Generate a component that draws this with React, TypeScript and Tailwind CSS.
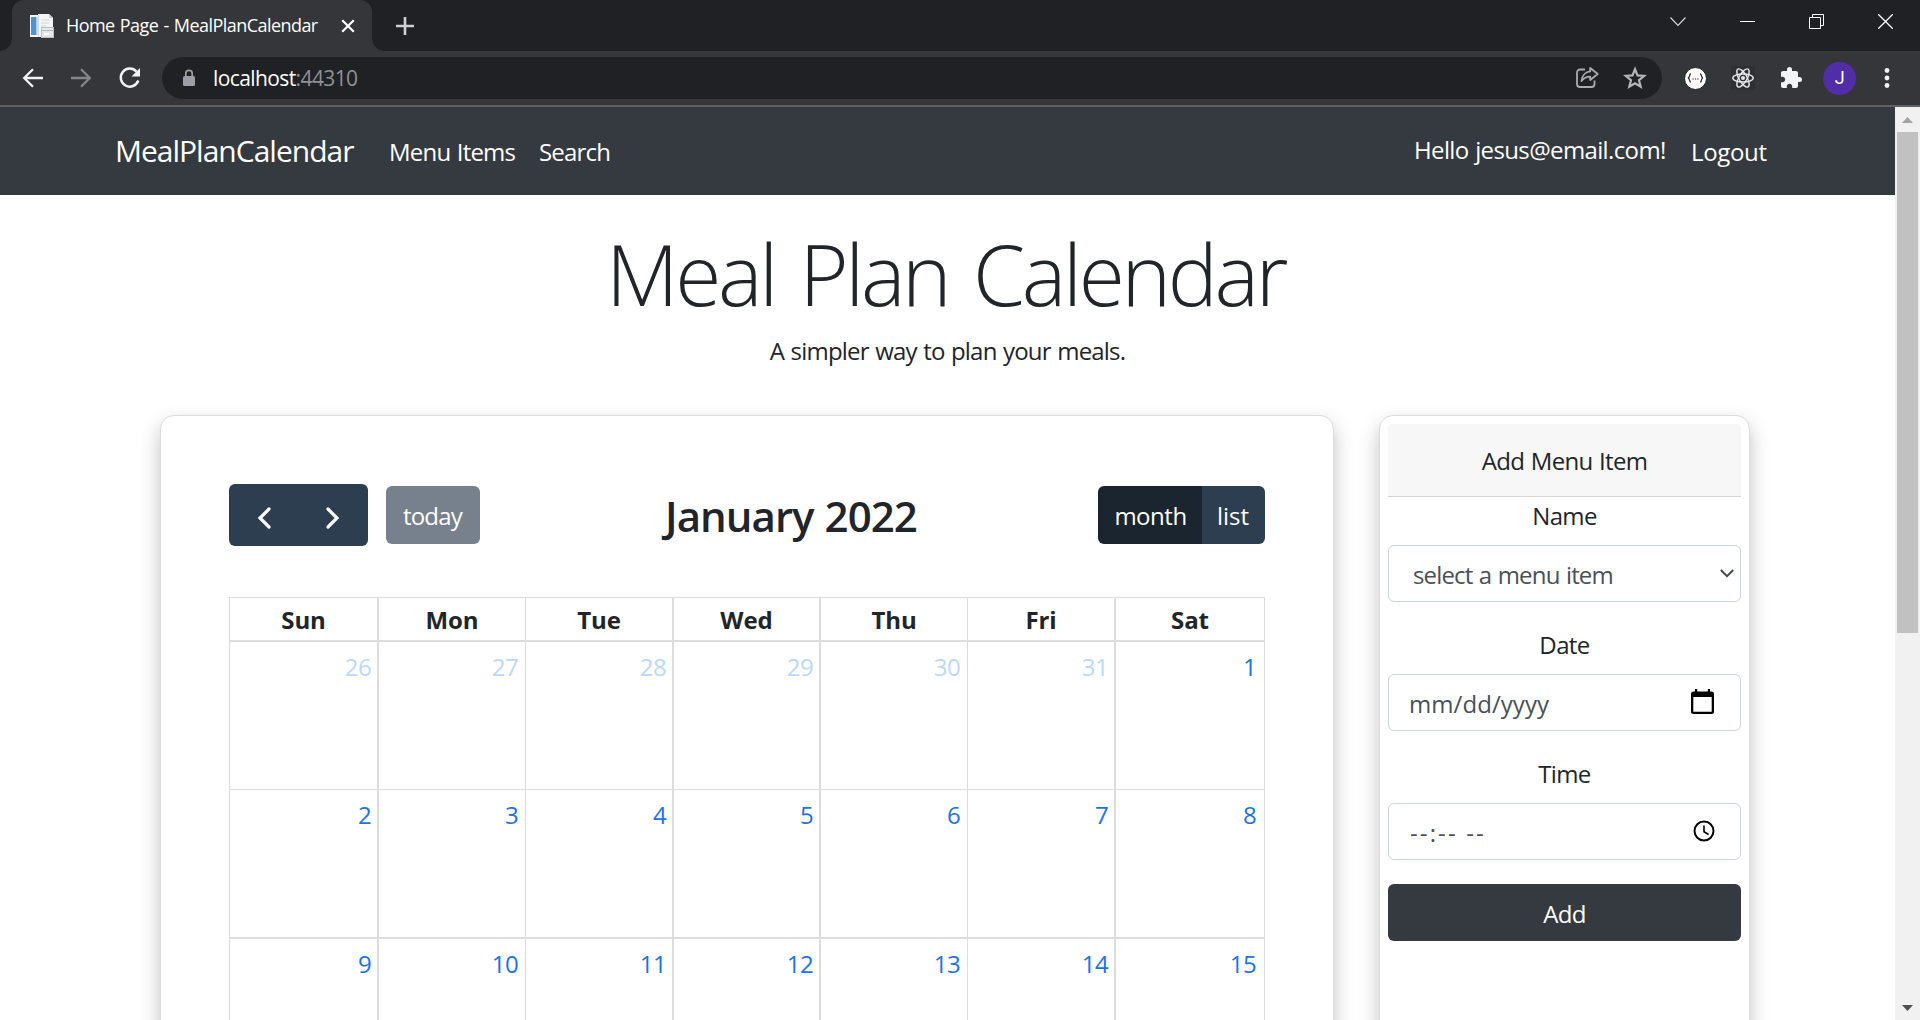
import type { ReactNode } from "react";

const DAYS = ["Sun", "Mon", "Tue", "Wed", "Thu", "Fri", "Sat"];
const WEEKS = [
  [26, 27, 28, 29, 30, 31, 1],
  [2, 3, 4, 5, 6, 7, 8],
  [9, 10, 11, 12, 13, 14, 15],
];
const COLUMNS = "grid grid-cols-[149px_147px_148px_147px_147px_148px_149px]";
const CELL_BORDER = ["border-r-2", "border-r", "border-r-2", "border-r-2", "border-r", "border-r-2", "border-r"];
const DIGIT_PADDING = ["pr-[6px]", "pr-[7px]", "pr-[6px]", "pr-[6px]", "pr-[7px]", "pr-[6px]", "pr-[8px]"];
const ROW = [
  "h-[148px] border-b",
  "h-[149px] border-b-2",
  "h-[149px]",
];

function Favicon() {
  return (
    <svg width="24" height="24" viewBox="0 0 24 24">
      <rect x="0" y="1" width="14" height="22" fill="#f2f6fa" />
      <rect x="1" y="3" width="5" height="18" fill="#4d94cc" />
      <rect x="6" y="3" width="1.5" height="18" fill="#a9cbe6" />
      <path d="M8 0h11l4 4v19H8z" fill="#f4f5f6" />
      <path d="M19 0v4h4z" fill="#c9ced3" />
      <path d="M8.5 1v22" stroke="#cfd8e0" />
      <path d="M11 6h8M11 9h8M11 12h5" stroke="#dde1e5" strokeWidth="1.4" />
      <rect x="11.5" y="13.5" width="12" height="10" fill="#e5e8ea" stroke="#b9bec3" />
      <path d="M12 16.5h11" stroke="#b3b8bd" />
      <path d="M14 20h5" stroke="#fff" strokeWidth="2" />
    </svg>
  );
}

function TabStrip() {
  return (
    <div className="flex h-[51px] bg-[#202124]">
      <div className="relative ml-3 flex w-[360px] items-center rounded-t-[12px] bg-[#35363a] pl-[18px]">
        <span className="absolute bottom-0 -left-3 h-3 w-3 bg-[radial-gradient(circle_at_0_0,#202124_11.5px,#35363a_12px)]" />
        <span className="absolute -right-3 bottom-0 h-3 w-3 bg-[radial-gradient(circle_at_100%_0,#202124_11.5px,#35363a_12px)]" />
        <Favicon />
        <span className="ml-[12px] w-[264px] pb-px text-[18px] tracking-[-0.55px] [word-spacing:1px] whitespace-nowrap text-white">
          Home Page - MealPlanCalendar
        </span>
        <svg className="ml-[11px]" width="14" height="14" viewBox="0 0 14 14" stroke="#fff" strokeWidth="2.2">
          <path d="M1.2 1.2l11.6 11.6M12.8 1.2L1.2 12.8" />
        </svg>
      </div>
      <svg className="mt-[17px] ml-[24px]" width="18" height="18" viewBox="0 0 18 18" stroke="#cfd0d2" strokeWidth="2.6">
        <path d="M9 0v18M0 9h18" />
      </svg>
      <div className="mt-[14px] mr-[27px] ml-auto flex gap-[54px]">
        <svg width="16" height="15" viewBox="0 0 16 15" fill="none" stroke="#dcdcdd" strokeWidth="1.1">
          <path d="M.5 3.5L8 11.5l7.500-8" />
        </svg>
        <svg width="15" height="15" viewBox="0 0 15 15" stroke="#fff">
          <path d="M0 7.500h15" />
        </svg>
        <svg width="15" height="15" viewBox="0 0 15 15" fill="none" stroke="#fff">
          <path d="M.5 3.500h11v11H.5zM3.500 3.500v-3h11v11h-3" />
        </svg>
        <svg width="15" height="15" viewBox="0 0 15 15" stroke="#fff" strokeWidth="1.3">
          <path d="M0 0l15 15M15 0L0 15" />
        </svg>
      </div>
    </div>
  );
}

function ReactIcon() {
  return (
    <span className="ml-[24px] flex h-6 w-6 items-center justify-center bg-[#2f3033]">
      <svg width="22" height="22" viewBox="-11 -11 22 22" fill="none" stroke="#e8e9ea" strokeWidth="1.4">
        <ellipse rx="10.200" ry="4" />
        <ellipse rx="10.200" ry="4" transform="rotate(60)" />
        <ellipse rx="10.200" ry="4" transform="rotate(120)" />
        <circle r="2" fill="#e8e9ea" stroke="none" />
      </svg>
    </span>
  );
}

function Toolbar() {
  return (
    <div className="flex h-[56px] items-center border-b-2 border-[#5f6064] bg-[#35363a]">
      <svg className="ml-[22px]" width="22" height="20" viewBox="0 0 22 20" fill="none" stroke="#f1f3f4" strokeWidth="2.300">
        <path d="M21 10H2.500M11 1.200L2.200 10l8.800 8.800" />
      </svg>
      <svg className="ml-[26px]" width="22" height="20" viewBox="0 0 22 20" fill="none" stroke="#85868a" strokeWidth="2.300">
        <path d="M1 10h18.500M11 1.200l8.800 8.800-8.800 8.800" />
      </svg>
      <svg className="ml-[26px]" width="24" height="22" viewBox="0 0 24 22" fill="none">
        <path d="M18.500 4.600A9 9 0 1 0 20.300 13.500" stroke="#f1f3f4" strokeWidth="2.500" />
        <path d="M22 1v8.500h-8.500z" fill="#f1f3f4" />
      </svg>
      <div className="ml-[20px] flex h-[42px] w-[1500px] items-center rounded-full bg-[#202124] pr-[15px] pl-[20px]">
        <svg width="14" height="18" viewBox="0 0 14 18" fill="none">
          <rect x="1" y="7" width="12" height="10" rx="1.500" fill="#9aa0a6" />
          <path d="M3.800 7.500V4.600a3.200 3.200 0 0 1 6.400 0v2.900" stroke="#9aa0a6" strokeWidth="1.700" />
        </svg>
        <span className="ml-[17px] text-[21px] tracking-[-0.6px] text-white">
          localhost<span className="text-[#8f9195]">:44310</span>
        </span>
        <svg className="ml-auto" width="23" height="22" viewBox="0 0 23 22" fill="none" stroke="#a9abaf" strokeWidth="1.800" strokeLinejoin="round">
          <path d="M9 2.500H4a3 3 0 0 0-3 3V17a3 3 0 0 0 3 3h11.500a3 3 0 0 0 3-3v-3.500" />
          <path d="M14.200 1l7.500 6-7.500 6V9.700c-4 0-6.500 1.300-8.700 4.300.5-5 3.700-9 8.700-9.600z" />
        </svg>
        <svg className="ml-[24px]" width="24" height="24" viewBox="0 0 24 24" fill="none" stroke="#b4b6b9" strokeWidth="2.200">
          <path d="M12 3.200l2.500 6.200 6.700.5-5.200 4.300 1.700 6.500L12 17.200l-5.700 3.500L8 14.200 2.800 9.900l6.700-.5z" />
        </svg>
      </div>
      <span className="ml-[22px] flex h-[23px] w-[23px] items-center justify-center rounded-full border border-[#18191b] bg-white">
        <svg width="17" height="10" viewBox="0 0 17 10" fill="none" stroke="#222" strokeWidth="1.200">
          <path d="M4 .8C1.800.8 3.400 4.500 1 5c2.400.5.800 4.200 3 4.200M13 .8c2.200 0 .6 3.700 3 4.200-2.400.5-.8 4.200-3 4.200" />
          <path d="M5.500 6h1.300M7.900 6h1.300M10.300 6h1.300" strokeWidth="1.200" />
        </svg>
      </span>
      <ReactIcon />
      <svg className="ml-[24px]" width="24" height="24" viewBox="0 0 24 24" fill="#f1f3f4">
        <path d="M20.500 11H19V7c0-1.100-.9-2-2-2h-4V3.500a2.500 2.500 0 0 0-5 0V5H4c-1.100 0-2 .9-2 2v3.800h1.500c1.500 0 2.700 1.200 2.700 2.700S5 16.200 3.500 16.200H2V20c0 1.100.9 2 2 2h3.800v-1.500c0-1.500 1.200-2.700 2.700-2.700s2.700 1.200 2.700 2.700V22H17c1.100 0 2-.9 2-2v-4h1.500a2.500 2.500 0 0 0 0-5z" />
      </svg>
      <span className="ml-[20px] flex h-[33px] w-[33px] items-center justify-center rounded-full bg-[#512da8] font-['Roboto'] text-[18px] text-white">
        J
      </span>
      <svg className="ml-[28px]" width="6" height="22" viewBox="0 0 6 22" fill="#f1f3f4">
        <circle cx="3" cy="3.500" r="2.400" />
        <circle cx="3" cy="11" r="2.400" />
        <circle cx="3" cy="18.500" r="2.400" />
      </svg>
    </div>
  );
}

function Navbar() {
  return (
    <nav className="flex h-[88px] items-center bg-[#343a40] pl-[115px] whitespace-nowrap text-white">
      <span className="w-[274px] text-[30px] tracking-[-1px]">MealPlanCalendar</span>
      <span className="w-[150px] pt-[2px] tracking-[-0.8px] [word-spacing:1px]">Menu Items</span>
      <span className="pt-[2px] tracking-[-0.8px]">Search</span>
      <span className="mr-[25px] ml-auto w-[252px] pb-[2px] tracking-[-0.63px] [word-spacing:1px]">Hello jesus@email.com!</span>
      <span className="mr-[127px] w-[77px] pt-[2px] tracking-[-0.35px]">Logout</span>
    </nav>
  );
}

function CalendarCard() {
  return (
    <section className="h-[760px] w-[1174px] rounded-[14px] border border-[#dcdcdc] bg-white px-[68px] pt-[68px] shadow-[0_9px_20px_rgba(0,0,0,0.24)]">
      <div className="flex h-[62px] items-center">
        <div className="flex h-[62px] w-[139px] items-center rounded-[6px] bg-[#2c3e50] pt-[6px] pl-[28px] text-white">
          <svg width="15" height="24" viewBox="0 0 15 24" fill="none" stroke="currentColor" strokeWidth="3.200" strokeLinecap="round">
            <path d="M12 3L3 12l9 9" />
          </svg>
          <svg className="ml-[53px]" width="15" height="24" viewBox="0 0 15 24" fill="none" stroke="currentColor" strokeWidth="3.200" strokeLinecap="round">
            <path d="M3 3l9 9-9 9" />
          </svg>
        </div>
        <div className="ml-[18px] flex h-[58px] w-[94px] items-center justify-center rounded-[6px] bg-[#76818d] pt-[2px] pr-px tracking-[-0.8px] text-white">
          today
        </div>
        <h2 className="ml-[185px] pt-[2px] text-[42px] leading-none font-[570] tracking-[-0.95px] [word-spacing:1px]">January 2022</h2>
        <div className="ml-auto flex h-[58px] overflow-hidden rounded-[6px] text-white">
          <span className="flex w-[104px] items-center justify-center bg-[#1a252f] pt-[2px] pl-px tracking-[-0.48px]">month</span>
          <span className="flex w-[63px] items-center justify-center bg-[#2c3e50] pt-[2px] pr-px tracking-normal">list</span>
        </div>
      </div>
      <div className="mt-[51px] w-[1036px] border-t border-l border-[#ddd]">
        <div className={`${COLUMNS} h-[44px] border-b-2 border-[#ddd]`}>
          {DAYS.map((d, i) => (
            <div key={d} className={`${CELL_BORDER[i]} flex items-center justify-center border-[#ddd] pt-[2px] font-bold tracking-[-0.1px]`}>
              {d}
            </div>
          ))}
        </div>
        {WEEKS.map((week, w) => (
          <div key={w} className={`${COLUMNS} ${ROW[w]} border-[#ddd]`}>
            {week.map((n, i) => (
              <div key={n} className={`${CELL_BORDER[i]} ${DIGIT_PADDING[i]} border-[#ddd] pt-[7px] text-right ${n > 25 ? "text-[#bad8fc]" : "text-[#1a73e8]"}`}>
                {n}
              </div>
            ))}
          </div>
        ))}
      </div>
    </section>
  );
}

function Field({ label, children }: { label: string; children: ReactNode }) {
  return (
    <div className="mb-[25px]">
      <div className="text-center">{label}</div>
      <div className="mt-[11px] flex h-[57px] items-center rounded-[6px] border border-[#ced4da] text-[#495057]">{children}</div>
    </div>
  );
}

function AddCard() {
  return (
    <section className="ml-[45px] h-[760px] w-[371px] rounded-[14px] border border-[#dcdcdc] bg-white px-[8px] pt-[8px] shadow-[0_9px_20px_rgba(0,0,0,0.24)]">
      <div className="mb-px flex h-[73px] items-center justify-center rounded-t-[4px] border-b border-[#d4d4d4] bg-[#f7f7f7]">
        <span className="pt-px tracking-[-0.68px] [word-spacing:1px]">Add Menu Item</span>
      </div>
      <Field label="Name">
        <span className="ml-[24px] pt-[3px] tracking-[-0.84px] [word-spacing:1px]">select a menu item</span>
        <svg className="mr-[6px] mb-px ml-auto" width="14" height="9" viewBox="0 0 14 9" fill="none" stroke="#42484e" strokeWidth="2">
          <path d="M.8 1L7 7.200 13.200 1" />
        </svg>
      </Field>
      <Field label="Date">
        <span className="ml-[20px] pt-[2px] tracking-[0.06px]">mm/dd/yyyy</span>
        <svg className="mr-[26px] mb-[2px] ml-auto" width="23" height="25" viewBox="0 0 23 25" fill="#000">
          <path fillRule="evenodd" d="M4 0h2.200v2.500h10.600V0H19v2.500h1.500A2.500 2.500 0 0 1 23 5v17.500a2.500 2.500 0 0 1-2.500 2.500h-18A2.500 2.500 0 0 1 0 22.500V5a2.500 2.500 0 0 1 2.500-2.500H4zM2.300 8v14.700h18.400V8z" />
        </svg>
      </Field>
      <Field label="Time">
        <span className="ml-[21px] pt-[3px] tracking-[2.12px]">--:-- --</span>
        <svg className="mr-[25px] mb-px ml-auto" width="22" height="22" viewBox="0 0 22 22" fill="none" stroke="#000">
          <circle cx="11" cy="11" r="9.500" strokeWidth="2" />
          <path d="M11 5.500v6.200l4.600 2.800" strokeWidth="1.600" />
        </svg>
      </Field>
      <button className="-mt-px flex h-[57px] w-full items-center justify-center rounded-[6px] bg-[#343a40] pt-[2px] text-white">Add</button>
    </section>
  );
}

function Scrollbar() {
  return (
    <div className="flex w-[25px] flex-col items-center bg-[#f1f1f1]">
      <svg className="mt-[10px]" width="11" height="6" viewBox="0 0 11 6" fill="#a3a3a3">
        <path d="M5.500 0L11 6H0z" />
      </svg>
      <div className="mt-[9px] h-[501px] w-[21px] bg-[#c1c1c1]" />
      <svg className="mt-auto mb-[9px]" width="11" height="6" viewBox="0 0 11 6" fill="#505050">
        <path d="M5.500 6L11 0H0z" />
      </svg>
    </div>
  );
}

export default function App() {
  return (
    <div className="flex h-[1020px] w-[1920px] flex-col overflow-hidden bg-white font-['Open_Sans','Noto_Sans',sans-serif] text-[24px] leading-[36px] tracking-[-0.63px] text-[#212529]">
      <TabStrip />
      <Toolbar />
      <div className="flex min-h-0 flex-1">
        <div className="w-[1895px] overflow-hidden">
          <Navbar />
          <h1 className="mt-[27px] h-[104px] pr-[4px] text-center text-[84px] leading-[104px] font-light tracking-[-3.3px] [word-spacing:6px]">
            Meal Plan Calendar
          </h1>
          <p className="mt-[7px] text-center tracking-[-0.8px] [word-spacing:1px]">A simpler way to plan your meals.</p>
          <div className="mt-[46px] ml-[160px] flex">
            <CalendarCard />
            <AddCard />
          </div>
        </div>
        <Scrollbar />
      </div>
    </div>
  );
}
